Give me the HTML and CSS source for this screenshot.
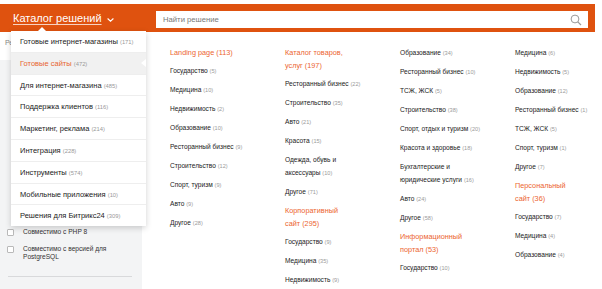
FILE: index.html
```html
<!DOCTYPE html>
<html lang="ru">
<head>
  <meta charset="UTF-8">
  <title>Каталог решений</title>
  <link rel="stylesheet" href="styles.css">
</head>
<body>
  <!-- Top bar -->
  <header class="topbar">
    <div class="catalog-toggle">
      <span class="catalog-title">Каталог решений</span>
      <svg class="chevron" width="7" height="4" viewBox="0 0 7 4"><path d="M0.6 0.5 L3.5 3.2 L6.4 0.5" fill="none" stroke="#fff" stroke-width="1.1"/></svg>
    </div>
    <div class="search">
      <input type="text" class="search-input" placeholder="Найти решение">
      <svg class="search-icon" width="12" height="12" viewBox="0 0 12 12"><circle cx="5" cy="5" r="3.9" fill="none" stroke="#9a9a9a" stroke-width="1"/><path d="M7.8 7.8 L11 11" stroke="#9a9a9a" stroke-width="1.2"/></svg>
    </div>
  </header>

  <div class="page">
    <!-- Sidebar with filters -->
    <aside class="sidebar">
      <div class="sidebar-head">Рейтинг</div>
      <div class="filters">
        <label class="filter-item"><span class="checkbox"></span>Совместимо с PHP 8</label>
        <label class="filter-item"><span class="checkbox"></span>Совместимо с версией для PostgreSQL</label>
        <div class="filters-line"></div>
      </div>
    </aside>

    <!-- Categories -->
    <main class="catalog">
      <div class="catalog-col">
        <div class="cat-title">Landing page <span>(113)</span></div>
        <div class="cat-item">Государство <span>(5)</span></div>
        <div class="cat-item">Медицина <span>(10)</span></div>
        <div class="cat-item">Недвижимость <span>(2)</span></div>
        <div class="cat-item">Образование <span>(10)</span></div>
        <div class="cat-item">Ресторанный бизнес <span>(9)</span></div>
        <div class="cat-item">Строительство <span>(12)</span></div>
        <div class="cat-item">Спорт, туризм <span>(9)</span></div>
        <div class="cat-item">Авто <span>(9)</span></div>
        <div class="cat-item">Другое <span>(28)</span></div>
      </div>
      <div class="catalog-col">
        <div class="cat-title">Каталог товаров, услуг <span>(197)</span></div>
        <div class="cat-item">Ресторанный бизнес <span>(22)</span></div>
        <div class="cat-item">Строительство <span>(35)</span></div>
        <div class="cat-item">Авто <span>(21)</span></div>
        <div class="cat-item">Красота <span>(15)</span></div>
        <div class="cat-item">Одежда, обувь и аксессуары <span>(10)</span></div>
        <div class="cat-item">Другое <span>(71)</span></div>
        <div class="cat-title">Корпоративный сайт <span>(295)</span></div>
        <div class="cat-item">Государство <span>(9)</span></div>
        <div class="cat-item">Медицина <span>(35)</span></div>
        <div class="cat-item">Недвижимость <span>(9)</span></div>
      </div>
      <div class="catalog-col">
        <div class="cat-item">Образование <span>(34)</span></div>
        <div class="cat-item">Ресторанный бизнес <span>(10)</span></div>
        <div class="cat-item">ТСЖ, ЖСК <span>(5)</span></div>
        <div class="cat-item">Строительство <span>(38)</span></div>
        <div class="cat-item">Спорт, отдых и туризм <span>(20)</span></div>
        <div class="cat-item">Красота и здоровье <span>(18)</span></div>
        <div class="cat-item">Бухгалтерские и юридические услуги <span>(16)</span></div>
        <div class="cat-item">Авто <span>(24)</span></div>
        <div class="cat-item">Другое <span>(58)</span></div>
        <div class="cat-title">Информационный портал <span>(53)</span></div>
        <div class="cat-item">Государство <span>(10)</span></div>
      </div>
      <div class="catalog-col">
        <div class="cat-item">Медицина <span>(6)</span></div>
        <div class="cat-item">Недвижимость <span>(5)</span></div>
        <div class="cat-item">Образование <span>(12)</span></div>
        <div class="cat-item">Ресторанный бизнес <span>(1)</span></div>
        <div class="cat-item">ТСЖ, ЖСК <span>(5)</span></div>
        <div class="cat-item">Спорт, туризм <span>(1)</span></div>
        <div class="cat-item">Другое <span>(7)</span></div>
        <div class="cat-title">Персональный сайт <span>(36)</span></div>
        <div class="cat-item">Государство <span>(7)</span></div>
        <div class="cat-item">Медицина <span>(4)</span></div>
        <div class="cat-item">Образование <span>(4)</span></div>
      </div>
    </main>

    <!-- Dropdown menu -->
    <nav class="dropdown">
      <a class="dropdown-item">Готовые интернет-магазины <span>(171)</span></a>
      <a class="dropdown-item active">Готовые сайты <span>(472)</span></a>
      <a class="dropdown-item">Для интернет-магазина <span>(485)</span></a>
      <a class="dropdown-item">Поддержка клиентов <span>(116)</span></a>
      <a class="dropdown-item">Маркетинг, реклама <span>(214)</span></a>
      <a class="dropdown-item">Интеграция <span>(228)</span></a>
      <a class="dropdown-item">Инструменты <span>(574)</span></a>
      <a class="dropdown-item">Мобильные приложения <span>(10)</span></a>
      <a class="dropdown-item">Решения для Битрикс24 <span>(309)</span></a>
    </nav>
  </div>
</body>
</html>
```

FILE: styles.css
```css
/* General */
body {
  margin: 0;
  font-family: "Liberation Sans", Arial, sans-serif;
  color: #333;
  background: #fff;
  overflow: hidden;
}

/* Top bar */
.topbar {
  display: flex;
  margin-top: 4px;
  width: 595px;
  height: 28px;
  background: #df520f;
}

.catalog-toggle {
  display: flex;
  align-items: center;
  width: 156px;
  height: 16px;
  padding: 5px 0 0 13px;
  margin-top: 4px;
  box-sizing: border-box;
}

.catalog-title {
  color: #fff;
  font-size: 11px;
  line-height: 13px;
  text-decoration: underline;
  text-decoration-color: rgba(255, 255, 255, 0.75);
  text-underline-offset: 2px;
}

.chevron {
  margin-left: 5px;
  margin-top: 2px;
}

.search {
  display: flex;
  align-items: center;
  margin-top: 7px;
  width: 432px;
  height: 17px;
  background: #fff;
  padding: 0 6px 0 7px;
  box-sizing: border-box;
}

.search-input {
  flex: 1;
  border: none;
  outline: none;
  padding: 0;
  font-family: inherit;
  font-size: 7.7px;
  color: #333;
}

.search-input::placeholder {
  color: #777;
}

/* Page */
.page {
  position: relative;
  display: flex;
  height: 257px;
}

.sidebar {
  display: flex;
  flex-direction: column;
  width: 142px;
  flex: none;
}

.sidebar-head {
  height: 28px;
  padding: 7px 0 0 5px;
  box-sizing: border-box;
  font-size: 7px;
  color: #888;
}

.filters {
  flex: 1;
  background: #f3f4f5;
  padding: 168px 10px 0 7px;
}

.filter-item {
  display: flex;
  align-items: flex-start;
  font-size: 6.6px;
  line-height: 8.5px;
  color: #333;
  margin-bottom: 8px;
  padding-right: 20px;
}

.checkbox {
  flex: none;
  width: 5px;
  height: 5px;
  margin: 1px 9px 0 0;
  border: 1px solid #b9b9b9;
  border-radius: 1px;
  background: #fff;
}

.filters-line {
  margin-top: 14px;
  margin-left: 1px;
  border-top: 1px solid #d8d9db;
}

/* Categories */
.catalog {
  flex: 1;
  display: flex;
  padding: 14px 0 0 28px;
}

.catalog-col {
  width: 115px;
  flex: none;
}

.cat-title {
  max-width: 66px;
  font-size: 7.3px;
  line-height: 13px;
  color: #ec6530;
  margin-bottom: 5px;
}

.cat-item {
  max-width: 88px;
  font-size: 6.6px;
  line-height: 13px;
  color: #222;
  margin-bottom: 6px;
}

.cat-item span {
  font-size: 5.6px;
  line-height: 0;
  color: #9a9a9a;
}

/* Dropdown menu */
.dropdown {
  position: absolute;
  left: 11px;
  top: -1px;
  width: 135px;
  background: #fff;
  box-shadow: 0 2px 6px rgba(0, 0, 0, 0.18);
}

.dropdown::before {
  content: "";
  position: absolute;
  left: 27px;
  top: -4px;
  border-left: 4px solid transparent;
  border-right: 4px solid transparent;
  border-bottom: 4px solid #fff;
}

.dropdown-item {
  position: relative;
  display: block;
  height: 20.8px;
  line-height: 21px;
  padding-left: 9px;
  font-size: 7.5px;
  color: #222;
  border-bottom: 1px solid #eeeeee;
}

.dropdown-item:last-child {
  border-bottom: none;
}

.dropdown-item span {
  font-size: 5.8px;
  line-height: 0;
  color: #999;
}

.dropdown-item.active {
  background: #f1f1f1;
  color: #e8652f;
}

.dropdown-item.active::after {
  content: "";
  position: absolute;
  right: 0;
  top: 6px;
  border-top: 4px solid transparent;
  border-bottom: 4px solid transparent;
  border-right: 5px solid #fff;
}
```
